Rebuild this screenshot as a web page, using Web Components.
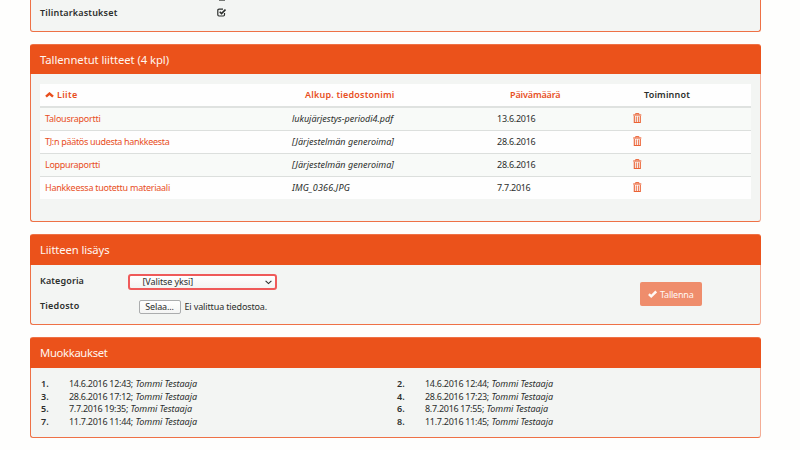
<!DOCTYPE html>
<html lang="fi">
<head>
<meta charset="utf-8">
<title>Liitteet</title>
<style>
html,body{margin:0;height:450px;overflow:hidden;background:#fefefd}
body{font:9px/13px "Noto Sans","Open Sans",sans-serif;color:#2b2e2c}
main{display:flex;flex-direction:column;gap:12px;width:731px;margin-left:30px}
</style>
</head>
<body>
<main>
  <status-panel></status-panel>
  <info-panel heading="Tallennetut liitteet (4 kpl)" fit="129" style="height:178px"><attachment-table></attachment-table></info-panel>
  <info-panel heading="Liitteen lisäys" fit="69.5" style="height:91px;--head:30px"><attachment-form></attachment-form></info-panel>
  <info-panel heading="Muokkaukset" fit="67.5" style="height:101px;--head:30px"><edit-history></edit-history></info-panel>
</main>
<script>
// Spreads its text to a given width by adjusting letter spacing.
customElements.define('fit-text', class extends HTMLElement {
  connectedCallback() {
    if (this.shadowRoot) return;
    const root = this.attachShadow({mode: 'open'});
    root.innerHTML = '<style>:host{display:inline-block;width:max-content;justify-self:start;white-space:nowrap}</style><slot></slot>';
    const fit = () => {
      const want = parseFloat(this.getAttribute('w'));
      this.style.letterSpacing = '0px';
      const have = this.getBoundingClientRect().width;
      const n = this.textContent.length;
      if (want && have) this.style.letterSpacing = ((want - have) / n) + 'px';
    };
    fit();
    requestAnimationFrame(fit);
  }
});

customElements.define('ui-icon', class extends HTMLElement {
  connectedCallback() {
    const icons = {
      check: '<svg width="9" height="9" viewBox="0 0 9 9"><path d="M7.500 5v1.800q0 1.200-1.200 1.200H2Q.8 8 .8 6.800V2.300Q.8 1.100 2 1.100H6" fill="none" stroke="currentColor" stroke-width="1.200"/><path d="M2.700 3.700l1.800 1.800L8.500 1.500" fill="none" stroke="currentColor" stroke-width="1.600"/></svg>',
      up: '<svg width="9" height="6" viewBox="0 0 9 6"><path d="M1 4.600l3.500-3L8 4.600" fill="none" stroke="currentColor" stroke-width="2.500"/></svg>',
      trash: '<svg width="9" height="11" viewBox="0 0 9 11"><g fill="none" stroke="currentColor"><path d="M2.600 1.500V.6h3.300v.9" stroke-width="1"/><path d="M.2 2h8.100" stroke-width="1.200"/><path d="M1.300 3v6.500h6V3" stroke-width="1.100"/><path d="M3.300 3.500v5.500M5.400 3.500v5.500" stroke-width=".9"/></g></svg>',
      ok: '<svg width="9" height="8" viewBox="0 0 9 8"><path d="M.9 4.200l2.300 2.100L8.200 1.500" fill="none" stroke="currentColor" stroke-width="2.500"/></svg>',
      down: '<svg width="7" height="5" viewBox="0 0 7 5"><path d="M.6.8l2.900 2.800L6.400.8" fill="none" stroke="currentColor" stroke-width="1.100"/></svg>'
    };
    this.attachShadow({mode: 'open'}).innerHTML =
      '<style>:host{display:inline-flex}svg{display:block}</style>' + icons[this.getAttribute('name')];
  }
});

customElements.define('status-panel', class extends HTMLElement {
  connectedCallback() {
    this.attachShadow({mode: 'open'}).innerHTML = `
<style>
:host{display:block;height:32px;box-sizing:border-box;border:1px solid #ee7146;border-top:0;border-radius:0 0 3px 3px;background:#f3f5f3}
.row{display:grid;grid-template-columns:177px 1fr;padding:5px 9px 0;font-weight:600}
ui-icon{padding-top:2px}
.previous{height:1px;margin:0 0 0 188px;width:6px;background:#777a77}
</style>
<div class="previous"></div>
<div class="row"><fit-text w="77.5">Tilintarkastukset</fit-text><ui-icon name="check"></ui-icon></div>`;
  }
});

customElements.define('info-panel', class extends HTMLElement {
  connectedCallback() {
    this.attachShadow({mode: 'open'}).innerHTML = `
<style>
:host{display:flex;flex-direction:column;box-sizing:border-box;border:1px solid #ee7146;border-right-color:#f4ad96;border-radius:3px;background:#f3f5f3}
header{height:var(--head,29px);flex:none;margin:0 -1px;padding-left:10px;background:#eb521b;color:#fff6f0;font-size:11.300px;line-height:var(--head,29px);border-radius:2px 2px 0 0}
.body{flex:1}
</style>
<header><fit-text w="${this.getAttribute('fit')}">${this.getAttribute('heading')}</fit-text></header>
<div class="body"><slot></slot></div>`;
  }
});

customElements.define('attachment-table', class extends HTMLElement {
  connectedCallback() {
    const rows = [
      ['Talousraportti', 55.5, 'lukujärjestys-periodi4.pdf', 101, '13.6.2016', 38.5],
      ['TJ:n päätös uudesta hankkeesta', 124.5, '[Järjestelmän generoima]', 102, '28.6.2016', 38.5],
      ['Loppuraportti', 55, '[Järjestelmän generoima]', 102, '28.6.2016', 38.5],
      ['Hankkeessa tuotettu materiaali', 125, 'IMG_0366.JPG', 58, '7.7.2016', 33.5]
    ];
    this.attachShadow({mode: 'open'}).innerHTML = `
<style>
:host{display:block;margin:10px 9px 0}
.row{display:grid;grid-template-columns:247px 205px 136px 1fr;padding-left:5px;height:22px;line-height:22px;background:#fefefe;border-top:1px solid #dcdfdd}
.row:nth-child(even){background:#f8faf8}
.head{height:22px;line-height:22px;border-top:0;font-weight:600;color:#e84e1d}
.head+.row{border-top:2px solid #dfe2e0;height:22px;line-height:21px}
.name,.head{color:#e84e1d}
.head span:nth-child(2){padding-left:13px}
.head span:nth-child(3){padding-left:13px}
.head span:nth-child(4){padding-left:11px;color:#2b2e2c}
.head ui-icon{margin-right:3px}
.row>ui-icon{color:#eb6234;padding-top:5px}
i{font-style:italic}
</style>
<section>
<div class="row head"><span><ui-icon name="up"></ui-icon><fit-text w="20.500">Liite</fit-text></span><span><fit-text w="89.500">Alkup. tiedostonimi</fit-text></span><span><fit-text w="50.500">Päivämäärä</fit-text></span><span><fit-text w="46">Toiminnot</fit-text></span></div>
${rows.map(r => `<div class="row"><span class="name"><fit-text w="${r[1]}">${r[0]}</fit-text></span><i><fit-text w="${r[3]}">${r[2]}</fit-text></i><span><fit-text w="${r[5]}">${r[4]}</fit-text></span><ui-icon name="trash"></ui-icon></div>`).join('')}
</section>`;
  }
});

customElements.define('attachment-form', class extends HTMLElement {
  connectedCallback() {
    this.attachShadow({mode: 'open'}).innerHTML = `
<style>
:host{display:grid;grid-template-columns:600px 62px;padding:9px 9px 0}
.field{display:grid;grid-template-columns:88px 1fr;height:25px}
.label{font-weight:600}
.select{display:flex;align-items:center;justify-content:space-between;box-sizing:border-box;width:149px;height:16px;border:2px solid #ef5a5a;border-radius:3px;background:linear-gradient(#fff,#f3f4f3);padding:0 3px 0 12.500px;line-height:12px}
.file{display:flex;align-items:center;height:15px;padding:0 0 0 10.500px;gap:4px}
.browse{box-sizing:border-box;width:42px;height:14px;border:1px solid #abadae;border-radius:2px;background:linear-gradient(#fff,#f4f5f4);text-align:center;line-height:12px}
.save{display:flex;align-items:center;gap:3px;box-sizing:border-box;height:24px;margin-top:8px;padding-left:8px;border-radius:2px;background:#ef8d6c;color:#fff8f4}
</style>
<div>
  <div class="field"><span class="label"><fit-text w="44">Kategoria</fit-text></span><div class="select"><fit-text w="50.500">[Valitse yksi]</fit-text><ui-icon name="down"></ui-icon></div></div>
  <div class="field"><span class="label"><fit-text w="39.500">Tiedosto</fit-text></span><div class="file"><span class="browse"><fit-text w="28.500">Selaa...</fit-text></span><fit-text w="82.500">Ei valittua tiedostoa.</fit-text></div></div>
</div>
<div class="save"><ui-icon name="ok"></ui-icon><fit-text w="33.500">Tallenna</fit-text></div>`;
  }
});

customElements.define('edit-history', class extends HTMLElement {
  connectedCallback() {
    const edits = [
      ['14.6.2016 12:43;', 64], ['14.6.2016 12:44;', 64],
      ['28.6.2016 17:12;', 64], ['28.6.2016 17:23;', 64],
      ['7.7.2016 19:35;', 59], ['8.7.2016 17:55;', 59],
      ['11.7.2016 11:44;', 64], ['11.7.2016 11:45;', 64]
    ];
    this.attachShadow({mode: 'open'}).innerHTML = `
<style>
:host{display:grid;grid-template-columns:356px 1fr;grid-auto-rows:12.600px;padding:9px 10px 0}
.edit{display:flex;line-height:13px}
b{font-weight:600;width:28px}
i{padding-left:2.500px}
</style>
${edits.map((e, n) => `<div class="edit"><b><fit-text w="8">${n + 1}.</fit-text></b><fit-text w="${e[1]}">${e[0]}</fit-text><i><fit-text w="61.500">Tommi Testaaja</fit-text></i></div>`).join('')}`;
  }
});
</script>
</body>
</html>
